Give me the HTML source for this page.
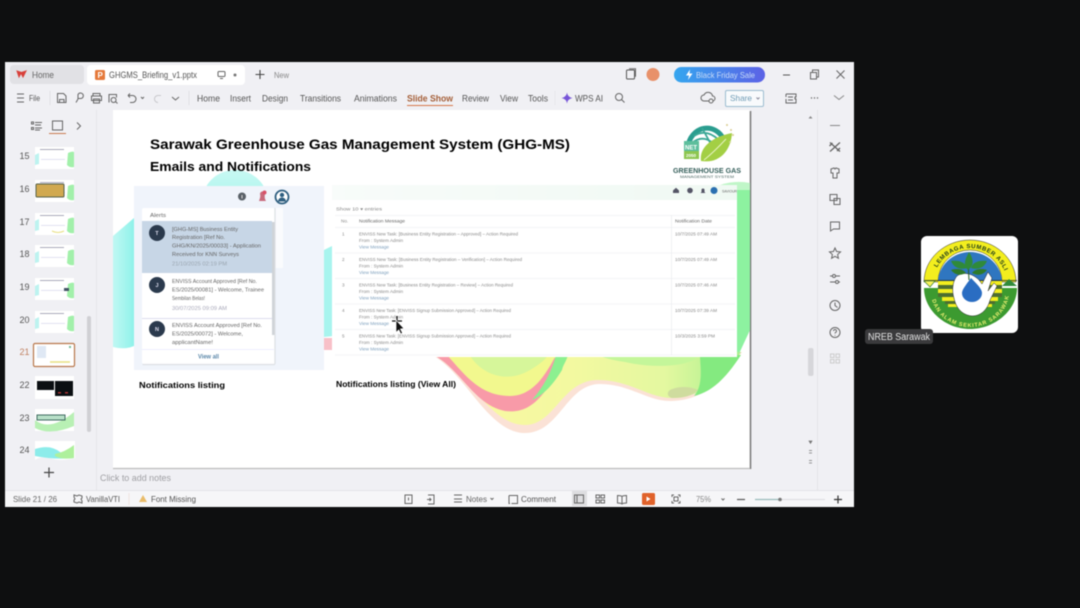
<!DOCTYPE html>
<html><head><meta charset="utf-8"><style>
html,body{margin:0;padding:0;background:#0e0f10;width:1080px;height:608px;overflow:hidden}
svg{display:block;position:absolute;left:0;top:0;filter:blur(.5px)}
text{font-family:"Liberation Sans",sans-serif;fill:#555;font-size:9px}
.i{fill:none;stroke:#666;stroke-width:1}
.r{font-size:9px;fill:#555}
.m{font-size:4.6px;fill:#888}
.l{font-size:4.6px;fill:#7d9fbd}
.a{font-size:5.6px;fill:#666}
.h{font-weight:bold;fill:#000}
</style></head><body>
<svg width="1080" height="608" viewBox="0 0 1080 608">
<defs>
<linearGradient id="pill" x1="0" x2="1"><stop offset="0" stop-color="#35a6ef"/><stop offset="1" stop-color="#5c62e6"/></linearGradient>
<linearGradient id="gs" x1="0" x2="1"><stop offset="0" stop-color="#f8fcfa"/><stop offset="1" stop-color="#f0f9f3"/></linearGradient>
<linearGradient id="wave" x1="0" x2="1"><stop offset="0" stop-color="#fbf7a4"/><stop offset=".45" stop-color="#f3f9a0"/><stop offset=".75" stop-color="#e4f8a0"/><stop offset="1" stop-color="#a6f08c"/></linearGradient>
<linearGradient id="arc" x1="0" x2="0" y1="0" y2="1"><stop offset="0" stop-color="#c8f9f3"/><stop offset="1" stop-color="#8ef0e8"/></linearGradient>
<linearGradient id="cy" x1="0" x2="1"><stop offset="0" stop-color="#c0f8f3"/><stop offset="1" stop-color="#8ff2ea"/></linearGradient>
<g id="tb"><rect width="39" height="22" fill="#fff"/><rect x="5" y="2" width="24" height="1" fill="#aab"/><rect x="6" y="12" width="24" height=".8" fill="#dde"/></g>
<path id="g" d="M33 6 Q37 4 39 5 V20 Q35 21 32 18 Z" fill="#a2f0aa"/>
<path id="c" d="M0 8 L4 6 V17 L0 18 Z" fill="#bdf3f0"/>
</defs>

<!-- window -->
<rect x="5" y="62" width="849" height="445" fill="#f0f0f4"/>
<rect x="10" y="65" width="74" height="19" rx="4" fill="#e1e1e5"/>
<rect x="87" y="65" width="158" height="20" rx="4" fill="#fff"/>
<path d="M17 71 L19 77 L21 73 L23 77 L26 71 L21.500 72.500 Z" fill="#d8403a" stroke="#d8403a"/>
<text x="32" y="78" textLength="22" lengthAdjust="spacingAndGlyphs" style="font-size:9px;fill:#666">Home</text>
<rect x="95" y="70" width="10" height="10" rx="1.500" fill="#e5793a"/>
<text x="97.500" y="78" style="font-size:8px;fill:#fff;font-weight:bold">P</text>
<text x="109" y="78" textLength="88" lengthAdjust="spacingAndGlyphs" style="font-size:9px;fill:#555">GHGMS_Briefing_v1.pptx</text>
<rect x="218" y="71.500" width="7" height="5" rx="1" class="i"/><path d="M220 78.500h3" class="i"/>
<circle cx="235" cy="75" r="1.500" fill="#777"/>
<path d="M260 70v9M255.500 74.500h9" stroke="#444" stroke-width="1.100"/>
<text x="274" y="78" textLength="15" lengthAdjust="spacingAndGlyphs" style="font-size:8px;fill:#888">New</text>

<rect x="626.500" y="70" width="8" height="9" rx="1" fill="none" stroke="#555"/><path d="M629 68.800h6.500v8" class="i"/>
<circle cx="653" cy="74.500" r="6.500" fill="#e8916a"/>
<rect x="674" y="67" width="91" height="15.500" rx="7.500" fill="url(#pill)"/>
<path d="M690 69.500 L686 75.500 H689 L688 80 L692.500 73.500 H689.500 Z" fill="#fff"/>
<text x="696" y="78" textLength="59" lengthAdjust="spacingAndGlyphs" style="font-size:8.500px;fill:#c9dcf8">Black Friday Sale</text>
<path d="M783 75h7" stroke="#555"/>
<rect x="810.500" y="72.500" width="6" height="6.500" class="i"/><path d="M812.500 72v-2h6v7h-2" class="i"/>
<path d="M836.500 70.500l8 8M844.500 70.500l-8 8" stroke="#666"/>

<!-- toolbar -->
<path d="M17 94h7M17 98h7M17 102h7" class="i"/>
<text x="29" y="101" textLength="11" lengthAdjust="spacingAndGlyphs" style="font-size:8.500px;fill:#555">File</text>
<path d="M50 91v14" stroke="#e0e0e4"/>
<path d="M57.500 93.500h6l2.500 2.500v6.500h-8.500zM59.500 102.500v-3h4.500v3" class="i"/>
<path d="M76 102.500l2-3.500M78 94.500a2.800 2.800 0 1 1 3 4h-3z" class="i"/>
<path d="M93 96v-2.500h7V96M91.500 96h10v4.500h-10zM93.500 99h6v4h-6z" class="i"/>
<path d="M109 102.500v-8h7.500v3M113.500 97.500a2.500 2.500 0 1 0 .1 0M115.500 101.500l2 2" class="i"/>
<path d="M128 95.500h4.500a3 3 0 0 1 0 7H130M128 95.500l2-2M128 95.500l2 2" class="i"/>
<path d="M141 97l1.500 1.500L144 97" class="i"/>
<path d="M161 95.500h-3a3 3 0 0 0 0 7" fill="none" stroke="#c8c8cc"/>
<path d="M172 97l3.500 3 3.500-3" class="i"/>
<path d="M189 91v14" stroke="#e0e0e4"/>
<text x="197" y="101.500" textLength="23" lengthAdjust="spacingAndGlyphs" class="r">Home</text>
<text x="230" y="101.500" textLength="21" lengthAdjust="spacingAndGlyphs" class="r">Insert</text>
<text x="262" y="101.500" textLength="26" lengthAdjust="spacingAndGlyphs" class="r">Design</text>
<text x="300" y="101.500" textLength="41" lengthAdjust="spacingAndGlyphs" class="r">Transitions</text>
<text x="354" y="101.500" textLength="43" lengthAdjust="spacingAndGlyphs" class="r">Animations</text>
<text x="407" y="101.500" textLength="46" lengthAdjust="spacingAndGlyphs" style="font-size:9px;fill:#a5603a;font-weight:bold">Slide Show</text>
<text x="462" y="101.500" textLength="27" lengthAdjust="spacingAndGlyphs" class="r">Review</text>
<text x="500" y="101.500" textLength="18" lengthAdjust="spacingAndGlyphs" class="r">View</text>
<text x="528" y="101.500" textLength="20" lengthAdjust="spacingAndGlyphs" class="r">Tools</text>
<text x="575" y="101.500" textLength="28" lengthAdjust="spacingAndGlyphs" class="r">WPS AI</text>
<rect x="407" y="105" width="46" height="1" fill="#d6774a"/>
<path d="M567 92.500 Q567.500 97 572.500 98 Q567.500 99 567 103.500 Q566.500 99 561.500 98 Q566.500 97 567 92.500Z" fill="#7755d8"/>
<path d="M555 91v14" stroke="#e6e6ea"/>
<circle cx="619" cy="97" r="3.500" class="i"/><path d="M621.500 99.500l3 3" class="i"/>
<path d="M704 101a3 3 0 0 1 0-6 4.500 4.500 0 0 1 8.500 1 2.500 2.500 0 0 1 0 5z" class="i"/><circle cx="711" cy="101" r="2" fill="#f2f2f5" stroke="#666"/>
<rect x="725.500" y="90.500" width="38" height="16" rx="1.500" fill="#f8fafc" stroke="#9cbdd0"/>
<text x="730" y="101" textLength="22" lengthAdjust="spacingAndGlyphs" style="font-size:8.500px;fill:#6f9cb5">Share</text>
<path d="M756.500 97.500l1.500 1.500 1.500-1.500" stroke="#889" fill="none"/>
<path d="M786 94h10v3h-1v2h1v4h-10v-4M786 94v3M788 97h5M788 100h5" class="i"/>
<circle cx="811.500" cy="98" r=".7" fill="#666"/><circle cx="814.500" cy="98" r=".7" fill="#666"/><circle cx="817.500" cy="98" r=".7" fill="#666"/>
<path d="M834 95.500l5 4 5-4" fill="none" stroke="#888"/>

<!-- left panel -->
<path d="M31.500 122h2v2h-2zM31.500 127.500h2v2h-2zM35 122.500h7M35 125h6M35 128h7M35 130h5" class="i" stroke-width=".8"/>
<rect x="52.500" y="121" width="10" height="9" class="i"/>
<rect x="49" y="133" width="17" height="1" fill="#c87a50"/>
<path d="M77 122.500l3.500 3.500-3.500 3.500" class="i"/>
<path d="M96.500 110V490" stroke="#e6e6ea"/>
<path d="M5 490.500H854" stroke="#e4e4e8"/>
<rect x="87" y="316" width="4" height="116" rx="2" fill="#d0d0d4"/>
<text x="19.500" y="159" textLength="10" lengthAdjust="spacingAndGlyphs" style="font-size:9.500px;fill:#555">15</text>
<text x="19.500" y="192" textLength="10" lengthAdjust="spacingAndGlyphs" style="font-size:9.500px;fill:#555">16</text>
<text x="19.500" y="225" textLength="10" lengthAdjust="spacingAndGlyphs" style="font-size:9.500px;fill:#555">17</text>
<text x="19.500" y="257" textLength="10" lengthAdjust="spacingAndGlyphs" style="font-size:9.500px;fill:#555">18</text>
<text x="19.500" y="290" textLength="10" lengthAdjust="spacingAndGlyphs" style="font-size:9.500px;fill:#555">19</text>
<text x="19.500" y="323" textLength="10" lengthAdjust="spacingAndGlyphs" style="font-size:9.500px;fill:#555">20</text>
<text x="19.500" y="355" textLength="10" lengthAdjust="spacingAndGlyphs" style="font-size:9.500px;fill:#c08060">21</text>
<text x="19.500" y="388" textLength="10" lengthAdjust="spacingAndGlyphs" style="font-size:9.500px;fill:#555">22</text>
<text x="19.500" y="421" textLength="10" lengthAdjust="spacingAndGlyphs" style="font-size:9.500px;fill:#555">23</text>
<text x="19.500" y="453" textLength="10" lengthAdjust="spacingAndGlyphs" style="font-size:9.500px;fill:#555">24</text>
<use href="#tb" x="35" y="147"/><use href="#g" x="35" y="147"/><use href="#c" x="35" y="147"/>
<use href="#tb" x="35" y="180"/><use href="#g" x="35" y="180"/><rect x="36" y="184" width="28" height="13" rx="1" fill="#d1a950" stroke="#55604a"/>
<use href="#tb" x="35" y="213"/><use href="#g" x="35" y="213"/><use href="#c" x="35" y="213"/><path d="M52 231q6 3 12 0" stroke="#e8e080" fill="none"/>
<use href="#tb" x="35" y="245"/><use href="#g" x="35" y="245"/><use href="#c" x="35" y="245"/>
<use href="#tb" x="35" y="278"/><use href="#g" x="35" y="278"/><use href="#c" x="35" y="278"/><rect x="64" y="288" width="5" height="3" fill="#456"/>
<use href="#tb" x="35" y="311"/><use href="#g" x="35" y="311"/><use href="#c" x="35" y="311"/>
<rect x="33.500" y="343.500" width="41" height="23" rx="1.500" fill="#fff" stroke="#b9784c" stroke-width="1.200"/>
<rect x="37" y="346" width="9" height="12" fill="#dfe8f4"/><path d="M50 362h20" stroke="#e8e080" stroke-width="1.500"/><rect x="69" y="346" width="2" height="2" fill="#7b9"/>
<rect x="35" y="376" width="39" height="23" fill="#fff"/><rect x="37" y="381" width="17" height="9" fill="#0b0f12"/><rect x="55" y="381" width="18" height="15" fill="#0b0f12"/><rect x="58" y="392" width="3" height="1.500" fill="#a33"/><rect x="65" y="392" width="3" height="1.500" fill="#a33"/>
<rect x="35" y="409" width="39" height="22" fill="#fff"/><path d="M35 420 Q50 432 74 412V426 Q50 436 35 428Z" fill="#b8f0b4"/><rect x="37" y="415" width="28" height="5" fill="#b8e0c8" stroke="#3e6a60"/>
<path d="M35 441H75V458 Q60 462 50 458 Q40 456 35 460Z" fill="#fff"/><path d="M35 449Q50 444 60 452T74 445V458Q55 460 35 456Z" fill="#8cecea"/><path d="M55 454Q65 452 74 445V458Q62 460 55 456Z" fill="#aef09c"/>
<path d="M49 467.500v10M44 472.500h10" stroke="#444" stroke-width="1.200"/>

<!-- scrollbar + right rail -->
<path d="M817.500 110V490" stroke="#e4e4e8"/>
<path d="M808.500 118.500l2-2.500 2 2.500z" fill="#888"/>
<rect x="808" y="348" width="5.500" height="28" rx="2" fill="#d6d6da"/>
<path d="M809 441h3l-1.500 2.500zM809 450.500h3M809 453h3M809 460.500h3M809 463h3" stroke="#777" fill="#777" stroke-width=".7"/>
<path d="M830 125.500h10" stroke="#888"/>
<path d="M830 142.500l10 9M840 142.500l-10 9M829.500 146l3-3M837 151l3-3" stroke="#666" stroke-width="1.300" fill="none"/>
<path d="M831 169l3-1 1 1 1-1 3 1v4h-2v5h-4v-5h-2z" class="i"/>
<path d="M830 194.500h7v6h-7zM834 198.500h6v6h-6z" class="i"/>
<path d="M830.500 222h9v7h-6l-3 2z" class="i"/>
<path d="M835 248l1.600 3.500 3.900.4-2.900 2.600.8 3.800-3.400-2-3.400 2 .8-3.800-2.900-2.600 3.900-.4z" class="i"/>
<path d="M830 276h2M836 276h4M830 282h5M838.500 282h1.500" class="i"/><circle cx="834" cy="276" r="1.500" class="i"/><circle cx="837" cy="282" r="1.500" class="i"/>
<circle cx="835" cy="305.500" r="5" class="i"/><path d="M835 302.500v3l2.500 2" class="i"/>
<circle cx="835" cy="332.500" r="5" class="i"/><path d="M833.500 331a1.500 1.500 0 1 1 2.300 1.300c-.6.400-.8.700-.8 1.200M835 335v.6" class="i" stroke-width=".8"/>
<g fill="none" stroke="#ccc"><rect x="830.500" y="354" width="3.500" height="3.500"/><rect x="836" y="354" width="3.500" height="3.500"/><rect x="830.500" y="359.500" width="3.500" height="3.500"/><rect x="836" y="359.500" width="3.500" height="3.500"/></g>

<!-- slide -->
<rect x="113" y="110" width="637" height="358" fill="#fff"/>
<path d="M750.500 111V469" fill="none" stroke="#777" stroke-width="1.500"/>
<path d="M113 468.500H750" stroke="#bdbdbd" stroke-width="1.200"/>
<!-- art -->
<ellipse cx="235" cy="202" rx="33" ry="32" fill="url(#arc)"/>
<path d="M113 236 L134 218 V346 Q125 350 113 347Z" fill="url(#cy)"/>
<path d="M324 250 L334 245 V336 L324 337Z" fill="#a8f4ee"/>
<rect x="324" y="338" width="8" height="12" fill="#f8c0c8"/>
<path d="M737 185 L750 184 V330 L737 358Z" fill="#8df2a0"/>
<path d="M720 185 Q735 180 750 183V190H720Z" fill="#c0f6c8"/>
<path d="M432 355 C465 372 488 433 525 433 C560 433 566 384 600 384 C630 384 648 402 672 401 C705 400 725 378 742 352 Z" fill="#fbe2d6"/>
<path d="M436 355 C468 372 490 425 525 425 C555 425 562 380 598 380 C630 380 648 398 672 398 C703 398 723 376 741 352 Z" fill="url(#wave)"/>
<path d="M437 357 C462 372 475 405 505 411 C535 415 545 388 556 378 C565 370 553 355 553 355 Z" fill="#f89aa8"/>
<path d="M447 355 C465 375 480 396 510 396 C535 396 548 370 556 355Z" fill="#f2f88e"/>
<path d="M470 356 C485 378 510 382 530 370 C540 364 545 360 548 355Z" fill="#d6f69a"/>
<path d="M556 355 L568 355 C566 362 563 365 562 370 C556 380 545 395 532 400 C545 385 552 370 556 355Z" fill="#8cf090"/>
<path d="M598 355 H700 C690 368 650 368 625 362 C612 360 604 358 598 355Z" fill="#c4f69a"/>
<path d="M700 355 H741 C726 378 712 392 694 396 C704 385 700 365 700 355Z" fill="#84ea80"/>
<path d="M672 398 C684 398 692 396 698 390 C690 386 678 386 670 390 C666 393 668 397 672 398Z" fill="#cfdc9e"/>

<!-- title -->
<text x="150" y="149" textLength="420" lengthAdjust="spacingAndGlyphs" style="font-size:14px;font-weight:bold;fill:#000">Sarawak Greenhouse Gas Management System (GHG-MS)</text>
<text x="150" y="171" textLength="161" lengthAdjust="spacingAndGlyphs" style="font-size:12.500px;font-weight:bold;fill:#000">Emails and Notifications</text>

<!-- logo -->
<path d="M688 147 A19 21 0 0 1 724 140" fill="none" stroke="#2a9d8f" stroke-width="5"/>
<path d="M694 136 Q706 128 719 140 M702 128 L712 146 M692 143 Q703 134 714 144" fill="none" stroke="#3aa896" stroke-width="1.800"/>
<rect x="684" y="141" width="15" height="18" fill="#5dbe9c"/>
<rect x="684" y="151" width="15" height="8" fill="#8dc650"/>
<text x="685" y="149.500" style="font-size:6px;fill:#fff;font-weight:bold">NET</text>
<text x="686" y="157" style="font-size:4.500px;fill:#fff;font-weight:bold">2050</text>
<path d="M701 161 C699 148 711 137 732 133 C731 150 720 164 701 161Z" fill="#a3cf44"/>
<path d="M704 160 Q714 152 726 139" stroke="#e6f2c2" fill="none"/>
<circle cx="731" cy="130" r="1" fill="#d9cd90"/><circle cx="733" cy="135" r="1" fill="#d9cd90"/><circle cx="730" cy="142" r="1" fill="#cfd990"/><circle cx="727" cy="125" r="1" fill="#d9cd90"/>
<text x="673" y="173" textLength="68" lengthAdjust="spacingAndGlyphs" style="font-size:7.500px;font-weight:bold;fill:#37605c">GREENHOUSE GAS</text>
<text x="680" y="178" textLength="54" lengthAdjust="spacingAndGlyphs" style="font-size:3.800px;fill:#4a6662">MANAGEMENT SYSTEM</text>

<!-- left screenshot -->
<rect x="134" y="186" width="190" height="184" fill="#f0f4fb"/>
<rect x="275" y="208" width="8" height="60" fill="#fafbfd"/>
<circle cx="242" cy="196.500" r="4" fill="#5a6168"/><rect x="241.500" y="195" width="1" height="3.500" fill="#ddd"/>
<path d="M259 201 Q261 196 260 194 a2.500 2.500 0 0 1 5 0 Q264 198 266 201z" fill="#c86a7c"/><circle cx="264.500" cy="192.500" r="2" fill="#d85068"/>
<circle cx="282" cy="197" r="6.500" fill="#fff" stroke="#2f5f80" stroke-width="1.800"/><circle cx="282" cy="195" r="2.200" fill="#2f5f80"/><path d="M278 201.500a4 4 0 0 1 8 0z" fill="#2f5f80"/>
<rect x="142" y="208" width="133" height="156" rx="2" fill="#fff"/>
<path d="M142.500 364.500H275M275 208V364" stroke="#dde0e4" stroke-width="1.200" fill="none"/>
<text x="150" y="217" textLength="16" lengthAdjust="spacingAndGlyphs" class="a">Alerts</text>
<rect x="142" y="221" width="130" height="52" fill="#c7d6e6"/>
<rect x="272" y="222" width="2.500" height="113" fill="#cfd3d8"/>
<path d="M142 318.500H272" stroke="#dde"/><path d="M142 349.500H274" stroke="#eef"/>
<circle cx="157" cy="233" r="8" fill="#2b3a4d"/><circle cx="157" cy="285" r="8" fill="#2b3a4d"/><circle cx="157" cy="329" r="8" fill="#2b3a4d"/>
<text x="155.300" y="235" style="font-size:5.500px;fill:#dde;font-weight:bold">T</text>
<text x="155.500" y="287" style="font-size:5.500px;fill:#dde;font-weight:bold">J</text>
<text x="155" y="331" style="font-size:5.500px;fill:#dde;font-weight:bold">N</text>
<text x="172" y="231" textLength="66" lengthAdjust="spacingAndGlyphs" class="a">[GHG-MS] Business Entity</text>
<text x="172" y="239" textLength="53" lengthAdjust="spacingAndGlyphs" class="a">Registration [Ref No.</text>
<text x="172" y="247.500" textLength="89" lengthAdjust="spacingAndGlyphs" class="a">GHG/KN/2025/00033] - Application</text>
<text x="172" y="256" textLength="67" lengthAdjust="spacingAndGlyphs" class="a">Received for KNN Surveys</text>
<text x="172" y="265.500" textLength="55" lengthAdjust="spacingAndGlyphs" style="font-size:5px;fill:#9aa5b0">21/10/2025 02:19 PM</text>
<text x="172" y="283" textLength="85" lengthAdjust="spacingAndGlyphs" class="a">ENVISS Account Approved [Ref No.</text>
<text x="172" y="291.500" textLength="92" lengthAdjust="spacingAndGlyphs" class="a">ES/2025/00081] - Welcome, Trainee</text>
<text x="172" y="300" textLength="33" lengthAdjust="spacingAndGlyphs" class="a">Sembilan Belas!</text>
<text x="172" y="310" textLength="55" lengthAdjust="spacingAndGlyphs" style="font-size:5px;fill:#aab">30/07/2025 09:09 AM</text>
<text x="172" y="327" textLength="90" lengthAdjust="spacingAndGlyphs" class="a">ENVISS Account Approved [Ref No.</text>
<text x="172" y="335.500" textLength="71" lengthAdjust="spacingAndGlyphs" class="a">ES/2025/00072] - Welcome,</text>
<text x="172" y="344" textLength="41" lengthAdjust="spacingAndGlyphs" class="a">applicantName!</text>
<text x="198" y="358.500" textLength="21" lengthAdjust="spacingAndGlyphs" style="font-size:6.500px;font-weight:bold;fill:#5c88aa">View all</text>
<text x="139" y="388" textLength="86" lengthAdjust="spacingAndGlyphs" style="font-size:8.500px;font-weight:bold;fill:#000">Notifications listing</text>
<text x="336" y="387" textLength="120" lengthAdjust="spacingAndGlyphs" style="font-size:8.500px;font-weight:bold;fill:#000">Notifications listing (View All)</text>

<!-- right screenshot -->
<rect x="332" y="185" width="405" height="172" fill="#fff"/>
<rect x="332" y="185" width="405" height="15" fill="url(#gs)"/>
<path d="M673 190.500l3-2.800 3 2.800v2.500h-6z" fill="#556"/>
<circle cx="690" cy="190.500" r="2.800" fill="#556"/>
<path d="M700.500 193l1-1v-2a1.500 1.500 0 0 1 3 0v2l1 1z" fill="#556"/>
<circle cx="714" cy="190.500" r="3.500" fill="#2a6fb0"/>
<text x="722" y="192.500" textLength="15" lengthAdjust="spacingAndGlyphs" style="font-size:4px;fill:#666">SAVIOUR</text>
<text x="336" y="210.500" textLength="46" lengthAdjust="spacingAndGlyphs" style="font-size:4.300px;fill:#888">Show  10  ▾  entries</text>
<path d="M335 215.500H735M335 227.500H735M335 253H735M335 278.500H735M335 304H735M335 329.500H735M335 355H735" stroke="#f0f1f4" stroke-width=".8"/>
<path d="M671.500 215V355" stroke="#eceef1" stroke-width=".8"/>
<text x="341" y="222.500" class="m">No.</text>
<text x="359" y="222.500" textLength="46" lengthAdjust="spacingAndGlyphs" class="m" style="fill:#666">Notification Message</text>
<text x="675" y="222.500" textLength="37" lengthAdjust="spacingAndGlyphs" class="m" style="fill:#666">Notification Date</text>
<text x="342" y="235.500" class="m">1</text><text x="342" y="261" class="m">2</text><text x="342" y="286.500" class="m">3</text><text x="342" y="312" class="m">4</text><text x="342" y="337.500" class="m">5</text>
<text x="359" y="235.500" textLength="159" lengthAdjust="spacingAndGlyphs" class="m">ENVISS New Task: [Business Entity Registration – Approved] – Action Required</text>
<text x="359" y="242" textLength="44" lengthAdjust="spacingAndGlyphs" class="m">From : System Admin</text>
<text x="359" y="248.500" textLength="30" lengthAdjust="spacingAndGlyphs" class="l">View Message</text>
<text x="359" y="261" textLength="163" lengthAdjust="spacingAndGlyphs" class="m">ENVISS New Task: [Business Entity Registration – Verification] – Action Required</text>
<text x="359" y="267.500" textLength="44" lengthAdjust="spacingAndGlyphs" class="m">From : System Admin</text>
<text x="359" y="274" textLength="30" lengthAdjust="spacingAndGlyphs" class="l">View Message</text>
<text x="359" y="286.500" textLength="154" lengthAdjust="spacingAndGlyphs" class="m">ENVISS New Task: [Business Entity Registration – Review] – Action Required</text>
<text x="359" y="293" textLength="44" lengthAdjust="spacingAndGlyphs" class="m">From : System Admin</text>
<text x="359" y="299.500" textLength="30" lengthAdjust="spacingAndGlyphs" class="l">View Message</text>
<text x="359" y="312" textLength="152" lengthAdjust="spacingAndGlyphs" class="m">ENVISS New Task: [ENVISS Signup Submission Approved] – Action Required</text>
<text x="359" y="318.500" textLength="44" lengthAdjust="spacingAndGlyphs" class="m">From : System Admin</text>
<text x="359" y="325" textLength="30" lengthAdjust="spacingAndGlyphs" class="l">View Message</text>
<text x="359" y="337.500" textLength="152" lengthAdjust="spacingAndGlyphs" class="m">ENVISS New Task: [ENVISS Signup Submission Approved] – Action Required</text>
<text x="359" y="344" textLength="44" lengthAdjust="spacingAndGlyphs" class="m">From : System Admin</text>
<text x="359" y="350.500" textLength="30" lengthAdjust="spacingAndGlyphs" class="l">View Message</text>
<text x="675" y="235.500" textLength="42" lengthAdjust="spacingAndGlyphs" class="m">10/7/2025 07:49 AM</text>
<text x="675" y="261" textLength="42" lengthAdjust="spacingAndGlyphs" class="m">10/7/2025 07:49 AM</text>
<text x="675" y="286.500" textLength="42" lengthAdjust="spacingAndGlyphs" class="m">10/7/2025 07:46 AM</text>
<text x="675" y="312" textLength="42" lengthAdjust="spacingAndGlyphs" class="m">10/7/2025 07:39 AM</text>
<text x="675" y="337.500" textLength="40" lengthAdjust="spacingAndGlyphs" class="m">10/3/2025 3:59 PM</text>
<!-- cursor -->
<path d="M392 321h10M397 316v10" stroke="#111" stroke-width="1.200"/>
<path d="M396 320V332.500L398.800 330 L400.800 334 L402.500 333 L400.500 329 L404 328.500Z" fill="#111" stroke="#fff" stroke-width=".7"/>

<!-- notes -->
<text x="100" y="481" textLength="71" lengthAdjust="spacingAndGlyphs" style="font-size:9px;fill:#a0a0a4">Click to add notes</text>

<!-- status bar -->
<rect x="5" y="491" width="849" height="16" fill="#f6f6f8"/>
<text x="13" y="502" textLength="44" lengthAdjust="spacingAndGlyphs" style="font-size:8.500px;fill:#666">Slide 21 / 26</text>
<path d="M74 495l3 1 2-1 3 1v2l-1 1 1 2v2l-3-1-2 1-3-1v-2l1-1-1-2z" class="i" stroke-width=".8"/>
<text x="86" y="502" textLength="34" lengthAdjust="spacingAndGlyphs" style="font-size:8.500px;fill:#555">VanillaVTI</text>
<path d="M129 493v12" stroke="#f0e4e0"/>
<path d="M143 495l4 7h-8z" fill="#e9bc6a"/>
<text x="151" y="502" textLength="45" lengthAdjust="spacingAndGlyphs" style="font-size:8.500px;fill:#555">Font Missing</text>
<rect x="405" y="495" width="7" height="8.500" class="i"/><path d="M408.500 497.500v3" class="i"/>
<path d="M428 495h6v9h-6M427 499.500h4M429.500 498l1.500 1.500-1.500 1.500" class="i"/>
<path d="M454 495h8M454 499h8M454 502h8" class="i"/>
<text x="466" y="502" textLength="21" lengthAdjust="spacingAndGlyphs" style="font-size:8.500px;fill:#666">Notes</text>
<path d="M490.500 498l1.500 1.500 1.500-1.500" class="i"/>
<path d="M509 495.500h8.500v8h-6M509 495.500v8h1" class="i"/>
<text x="521" y="502" textLength="35" lengthAdjust="spacingAndGlyphs" style="font-size:8.500px;fill:#555">Comment</text>
<rect x="572" y="491" width="15" height="15" fill="#dedee0"/>
<rect x="574.500" y="495" width="9" height="8" class="i"/><path d="M577 495v8" class="i"/>
<rect x="596" y="495" width="3.500" height="3" class="i"/><rect x="601" y="495" width="3.500" height="3" class="i"/><rect x="596" y="500" width="3.500" height="3" class="i"/><rect x="601" y="500" width="3.500" height="3" class="i"/>
<path d="M622 496.500c-1-1-3-1-4.500-1v7.500c1.500 0 3.500 0 4.500 1 1-1 3-1 4.500-1v-7.500c-1.500 0-3.500 0-4.500 1zM622 496.500v7.500" class="i"/>
<rect x="642" y="493" width="13" height="12" rx="1.500" fill="#e0622a"/><path d="M646.500 496.500v5l4-2.500z" fill="#fff"/>
<path d="M672 497v-2h2M678 495h2v2M680 501v2h-2M674 503h-2v-2" class="i"/><rect x="674" y="497" width="4" height="4" class="i"/>
<text x="696" y="502" textLength="15" lengthAdjust="spacingAndGlyphs" style="font-size:8.500px;fill:#888">75%</text>
<path d="M721.500 498.500l1.500 1.500 1.500-1.500" class="i"/>
<path d="M737 499.500h8" stroke="#555" stroke-width="1.200"/>
<path d="M755 499.500H825" stroke="#dcdce0"/><path d="M755 499.500H779" stroke="#9bb" stroke-width="1.200"/><circle cx="780" cy="499.500" r="1.800" fill="#777"/>
<path d="M838 495.500v8M834 499.500h8" stroke="#333" stroke-width="1.200"/>

<!-- NREB tile -->
<rect x="921" y="236" width="97" height="97" rx="6" fill="#fff"/>
<path d="M924 282 A46 42 0 0 1 1016 282 H1002 A32 32 0 0 0 938 282Z" fill="#f3ee1e" stroke="#333" stroke-width=".5"/>
<path d="M938 283 A32 31 0 0 1 1002 283 V290 H938Z" fill="#2f76c0"/>
<path d="M924 288 H1017 C1017 310 995 329 970 329 C945 329 924 310 924 288Z" fill="#3c9a30"/>
<path d="M924 280.500H1017" stroke="#222" stroke-width=".8"/>
<g>
<rect x="938" y="281" width="64" height="4" fill="#f3ee1e"/><rect x="938" y="285" width="64" height="4" fill="#4e6e30"/>
<rect x="938" y="289" width="64" height="4" fill="#f3ee1e"/><rect x="938" y="293" width="64" height="4" fill="#4e6e30"/>
<rect x="942" y="297" width="56" height="4" fill="#f3ee1e"/><rect x="945" y="301" width="50" height="3" fill="#4e6e30"/>
<rect x="948" y="304" width="44" height="3" fill="#f3ee1e"/>
</g>
<path d="M924 281h11l-5 6z" fill="#f8f25a" stroke="#2a7a2a" stroke-width=".6"/>
<path d="M1002 286l7-7 8 7z" fill="#2f8a3a"/>
<path d="M957 276 C952 282 952 292 954 298 C956 308 962 315 972 316 C982 316 988 308 990 300 L997 286 L994 283 L988 291 L992 278 L988 272 L982 284 L979 280 C973 274 964 271 957 276Z" fill="#fff" stroke="#222" stroke-width=".5"/>
<path d="M971 278 C965 286 962 290 962 293 A10 9 0 0 0 982 293 C982 289 977 284 971 278Z" fill="#2a6dc2"/>
<path d="M969 280 Q968 265 969 256" stroke="#225a22" stroke-width="1"/>
<path d="M968 270 C962 265 966 258 969 252 C973 258 975 265 968 270Z" fill="#2f8a3a"/>
<path d="M967 268 C960 270 954 268 951 261 C959 260 965 262 967 268ZM971 268 C978 270 984 268 987 261 C979 260 973 262 971 268Z" fill="#2f8a3a"/>
<path d="M966 273 C960 276 955 275 951 270 C957 268 963 269 966 273ZM972 273 C978 276 983 275 987 270 C981 268 975 269 972 273Z" fill="#2f7a2a"/>
<path id="t1" d="M933 284 A37 36 0 0 1 1007 284" fill="none"/>
<path id="t2" d="M931 292 A39 35 0 0 0 1009 292" fill="none"/>
<text textLength="84" lengthAdjust="spacing" style="font-size:6px;font-weight:bold;fill:#1c3a1c"><textPath href="#t1" startOffset="17">LEMBAGA SUMBER ASLI</textPath></text>
<text textLength="104" lengthAdjust="spacing" style="font-size:5.500px;font-weight:bold;fill:#e8ee70"><textPath href="#t2" startOffset="8">DAN ALAM SEKITAR SARAWAK</textPath></text>
<rect x="865" y="329" width="68" height="15" rx="3" fill="#3a3a3c"/>
<text x="868" y="340" textLength="62" lengthAdjust="spacingAndGlyphs" style="font-size:10px;fill:#e4e4e4">NREB Sarawak</text>
</svg>
</body></html>
